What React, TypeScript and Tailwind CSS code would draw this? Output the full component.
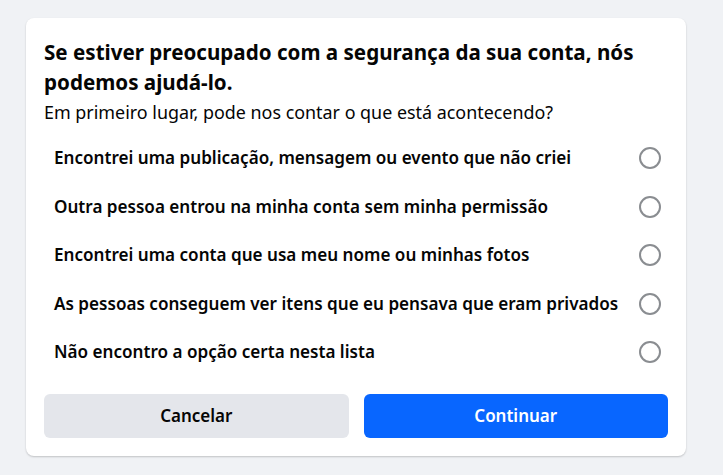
const options = [
  "Encontrei uma publicação, mensagem ou evento que não criei",
  "Outra pessoa entrou na minha conta sem minha permissão",
  "Encontrei uma conta que usa meu nome ou minhas fotos",
  "As pessoas conseguem ver itens que eu pensava que eram privados",
  "Não encontro a opção certa nesta lista",
];

export default function App() {
  return (
    <div
      className="min-h-screen bg-[#f0f2f5] pt-[18px] pl-[26px]"
      style={{ fontFamily: '"Noto Sans", "Open Sans", sans-serif' }}
    >
      <div className="w-[660px] rounded-lg bg-white px-[18px] pt-[19px] pb-[18px] shadow-[0_1px_2px_rgba(0,0,0,0.2)]">
        <h1 className="text-[20.6px] font-bold leading-[30px] text-[#050505]">
          Se estiver preocupado com a segurança da sua conta, nós podemos ajudá-lo.
        </h1>
        <p className="mt-[3px] text-[17.9px] leading-[24px] text-[#050505]">
          Em primeiro lugar, pode nos contar o que está acontecendo?
        </p>

        <div className="mt-[10px] flex flex-col">
          {options.map((label) => (
            <label
              key={label}
              className="flex h-[48.5px] cursor-pointer items-center justify-between pl-[10px] pr-[7px]"
            >
              <span className="text-[17.1px] font-semibold text-[#050505]">{label}</span>
              <span className="h-[22px] w-[22px] rounded-full border-2 border-[#8a8d91]" />
            </label>
          ))}
        </div>

        <div className="mt-[17px] flex gap-[15px]">
          <button className="h-[44px] flex-1 rounded-md bg-[#e4e6eb] text-[17px] font-semibold text-[#050505]">
            Cancelar
          </button>
          <button className="h-[44px] flex-1 rounded-md bg-[#0866ff] text-[17px] font-semibold text-white">
            Continuar
          </button>
        </div>
      </div>
    </div>
  );
}
